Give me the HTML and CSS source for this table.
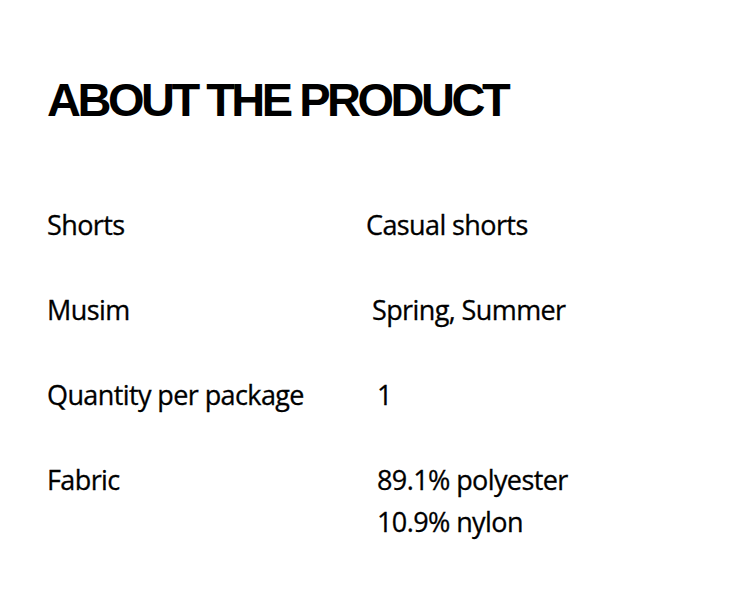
FILE: index.html
```html
<!DOCTYPE html>
<html>
<head>
<meta charset="utf-8">
<link rel="stylesheet" href="styles.css">
</head>
<body>
<main class="page">
  <h1 class="title">ABOUT THE PRODUCT</h1>
  <dl class="specs">
    <dt class="label">Shorts</dt>
    <dd class="value">Casual shorts</dd>
    <dt class="label">Musim</dt>
    <dd class="value indent-1">Spring, Summer</dd>
    <dt class="label">Quantity per package</dt>
    <dd class="value indent-2">1</dd>
    <dt class="label">Fabric</dt>
    <dd class="value indent-2">89.1% polyester<br>10.9% nylon</dd>
  </dl>
</main>
</body>
</html>
```
FILE: styles.css
```css
html, body {
  margin: 0;
  padding: 0;
  background: #ffffff;
}
.page {
  padding: 73px 0 0 47px;
  color: #000;
}
.title {
  margin: 0;
  font-family: "Liberation Sans", Arial, sans-serif;
  font-weight: 700;
  font-size: 47px;
  line-height: 54px;
  letter-spacing: -3.5px;
}
.specs {
  margin: 77px 0 0 0;
  display: grid;
  grid-template-columns: 319px 1fr;
  row-gap: 43px;
  font-family: "Open Sans", sans-serif;
  font-weight: 500;
  font-size: 27px;
  line-height: 42px;
  letter-spacing: -0.6px;
  -webkit-text-stroke: 0.3px #000;
}
.label, .value {
  margin: 0;
}
.indent-1 { padding-left: 6px; }
.indent-2 { padding-left: 11px; }
```
